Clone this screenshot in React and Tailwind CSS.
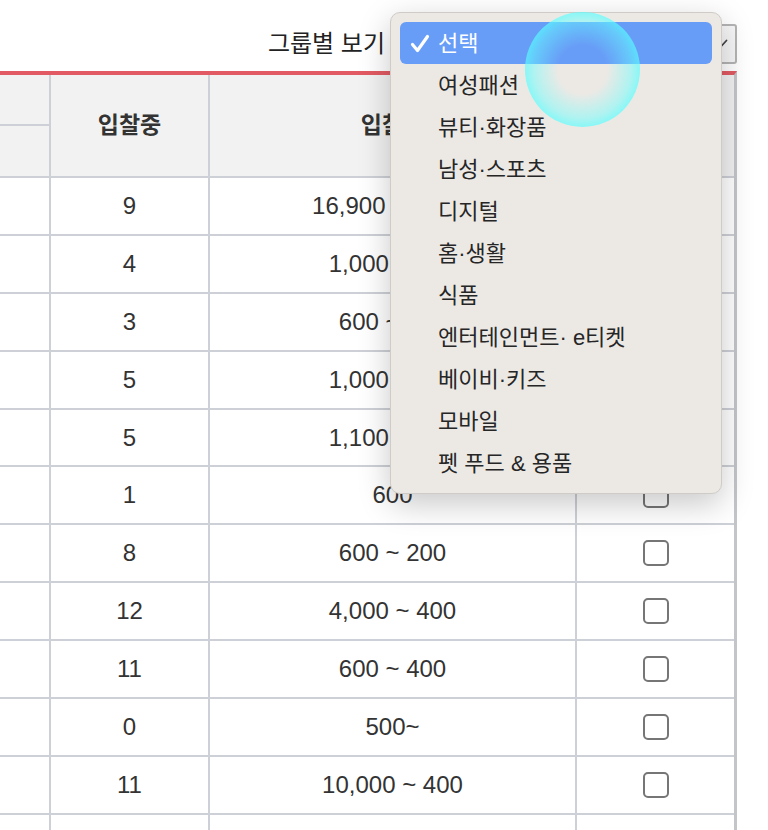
import React from 'react';

const ROWS = [
    ['9', '16,900 ~ 1,000'],
    ['4', '1,000 ~ 400'],
    ['3', '600 ~ 200'],
    ['5', '1,000 ~ 400'],
    ['5', '1,100 ~ 400'],
    ['1', '600'],
    ['8', '600 ~ 200'],
    ['12', '4,000 ~ 400'],
    ['11', '600 ~ 400'],
    ['0', '500~'],
    ['11', '10,000 ~ 400'],
    ['', ''],
];

const GROUPS = [
    '선택',
    '여성패션',
    '뷰티·화장품',
    '남성·스포츠',
    '디지털',
    '홈·생활',
    '식품',
    '엔터테인먼트· e티켓',
    '베이비·키즈',
    '모바일',
    '펫 푸드 & 용품',
];

const Check = () => (
    <svg width="20" height="19" viewBox="0 0 20 19" fill="none">
        <path d="M2.5 10.5 L7.5 16.5 L17.5 2.5" stroke="white" strokeWidth="3.2" strokeLinecap="round" strokeLinejoin="round" />
    </svg>
);

const GroupMenu = () => (
    <div className="absolute left-[390px] top-[12px] w-[332px] rounded-[10px] border border-[#cfccc8] bg-[#ece9e5] py-[9px] shadow-[0_10px_32px_rgba(0,0,0,0.22)]">
        {GROUPS.map((g, i) => (
            <div
                key={g}
                className={`mx-[9px] flex h-[42px] items-center rounded-[6px] text-[22px] ${
                    i === 0 ? 'bg-[#689df7] text-white' : 'text-[#262626]'
                }`}
            >
                <span className="flex w-[38px] justify-center pl-[1px]">{i === 0 && <Check />}</span>
                <span>{g}</span>
            </div>
        ))}
    </div>
);

export default function App() {
    return (
        <div className="relative h-[830px] w-[768px] overflow-hidden bg-white font-['Liberation_Sans','Noto_Sans_CJK_KR',sans-serif] text-[#333]">
            {/* group filter bar */}
            <div className="flex h-[71px] items-center justify-end gap-[10px] pr-[31px] pt-[16px]">
                <span className="text-[24px] text-[#222]">그룹별 보기</span>
                <div className="relative h-[40px] w-[342px] rounded-[3px] border-2 border-[#b4b4b4] bg-[#f6f6f6]">
                    <svg className="absolute right-[7px] top-[13px]" width="14" height="10" viewBox="0 0 14 10" fill="none">
                        <path d="M1.5 1.5 L7 7.5 L12.5 1.5" stroke="#444" strokeWidth="1.8" strokeLinecap="round" />
                    </svg>
                </div>
            </div>

            {/* auction table */}
            <div className="w-[737px] border-r-[3px] border-t-4 border-r-[#c4c5c9] border-t-[#e25a63]">
                <div className="grid grid-cols-[49px_157px_365px_157px] gap-[2px] bg-[#cdd0d6]">
                    <div className="flex h-[101px] flex-col gap-[2px]">
                        <div className="h-[49px] bg-[#f2f2f2]" />
                        <div className="flex-1 bg-[#f2f2f2]" />
                    </div>
                    <div className="flex h-[101px] items-center justify-center bg-[#f2f2f2] text-[23px] font-bold">입찰중</div>
                    <div className="flex h-[101px] items-center justify-center bg-[#f2f2f2] text-[23px] font-bold">입찰가</div>
                    <div className="h-[101px] bg-[#f2f2f2]" />

                    {ROWS.map(([count, price], i) => (
                        <React.Fragment key={i}>
                            <div className="h-[55.9px] bg-white" />
                            <div className="flex h-[55.9px] items-center justify-center bg-white text-[24px]">{count}</div>
                            <div className="flex h-[55.9px] items-center justify-center bg-white text-[24px]">{price}</div>
                            <div className="flex h-[55.9px] items-center justify-center bg-white">
                                {count && <span className="block h-[26px] w-[26px] rounded-[5px] border-2 border-[#767676]" />}
                            </div>
                        </React.Fragment>
                    ))}
                </div>
            </div>

            <GroupMenu />

            {/* touch indicator */}
            <div className="absolute left-[525px] top-[12px] h-[115px] w-[115px] rounded-full bg-[radial-gradient(circle,rgba(120,255,255,0)_30%,rgba(100,255,255,0.45)_60%,rgba(80,255,255,0.95)_84%,rgba(70,250,255,1)_100%)]" />
        </div>
    );
}
